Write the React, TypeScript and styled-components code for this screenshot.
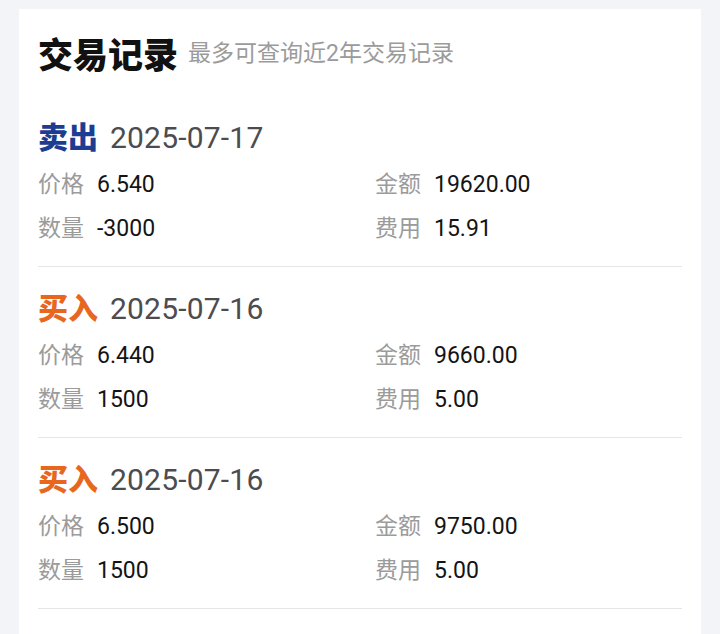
import React from "react";
import styled, { createGlobalStyle } from "styled-components";

const Global = createGlobalStyle`
  html, body { margin: 0; padding: 0; background: #f3f4f8; }
  body { font-family: Roboto, "Noto Sans CJK SC", sans-serif; -webkit-font-smoothing: antialiased; overflow: hidden; }
`;

const Page = styled.div`
  padding: 9px 19px 0;
  height: 625px;
  display: flex;
`;

const Card = styled.div`
  flex: 1;
  background: #ffffff;
  padding: 0 19px;
`;

const TitleBar = styled.div`
  display: flex;
  align-items: center;
  gap: 10px;
  height: 44px;
  padding: 22px 0 21px;
`;

const Title = styled.h1`
  margin: 0;
  font-size: 35px;
  font-weight: 900;
  color: #111111;
  font-family: "Noto Sans CJK SC", sans-serif;
  line-height: 44px;
`;

const Subtitle = styled.span`
  font-size: 23px;
  color: #9b9b9b;
  line-height: 44px;
  padding-top: 2px;
`;

const Record = styled.section`
  padding: 18px 0 20px;
  border-bottom: 1px solid #e6e6e6;
`;

const Header = styled.div`
  display: flex;
  align-items: baseline;
  gap: 12px;
  height: 42px;
  line-height: 42px;
`;

const Side = styled.span<{ $buy: boolean }>`
  font-family: "Noto Sans CJK SC", sans-serif;
  font-size: 30px;
  font-weight: 900;
  color: ${(p) => (p.$buy ? "#e8671f" : "#1d3d92")};
`;

const DateText = styled.span`
  font-size: 30px;
  color: #4c4c50;
  letter-spacing: 0.2px;
`;

const Grid = styled.div`
  display: grid;
  grid-template-columns: 1fr 1fr;
  column-gap: 30px;
  row-gap: 10px;
  margin-top: 12px;
`;

const Field = styled.div`
  display: flex;
  align-items: baseline;
  gap: 13px;
  height: 34px;
  line-height: 34px;
  font-size: 23px;
`;

const Label = styled.span`
  color: #9b9b9b;
`;

const Value = styled.span`
  color: #141414;
`;

type Rec = {
  buy: boolean;
  date: string;
  price: string;
  amount: string;
  qty: string;
  fee: string;
};

const records: Rec[] = [
  { buy: false, date: "2025-07-17", price: "6.540", amount: "19620.00", qty: "-3000", fee: "15.91" },
  { buy: true, date: "2025-07-16", price: "6.440", amount: "9660.00", qty: "1500", fee: "5.00" },
  { buy: true, date: "2025-07-16", price: "6.500", amount: "9750.00", qty: "1500", fee: "5.00" },
];

export default function App() {
  return (
    <>
      <Global />
      <Page>
        <Card>
          <TitleBar>
            <Title>交易记录</Title>
            <Subtitle>最多可查询近2年交易记录</Subtitle>
          </TitleBar>
          {records.map((r, i) => (
            <Record key={i}>
              <Header>
                <Side $buy={r.buy}>{r.buy ? "买入" : "卖出"}</Side>
                <DateText>{r.date}</DateText>
              </Header>
              <Grid>
                <Field>
                  <Label>价格</Label>
                  <Value>{r.price}</Value>
                </Field>
                <Field>
                  <Label>金额</Label>
                  <Value>{r.amount}</Value>
                </Field>
                <Field>
                  <Label>数量</Label>
                  <Value>{r.qty}</Value>
                </Field>
                <Field>
                  <Label>费用</Label>
                  <Value>{r.fee}</Value>
                </Field>
              </Grid>
            </Record>
          ))}
        </Card>
      </Page>
    </>
  );
}
